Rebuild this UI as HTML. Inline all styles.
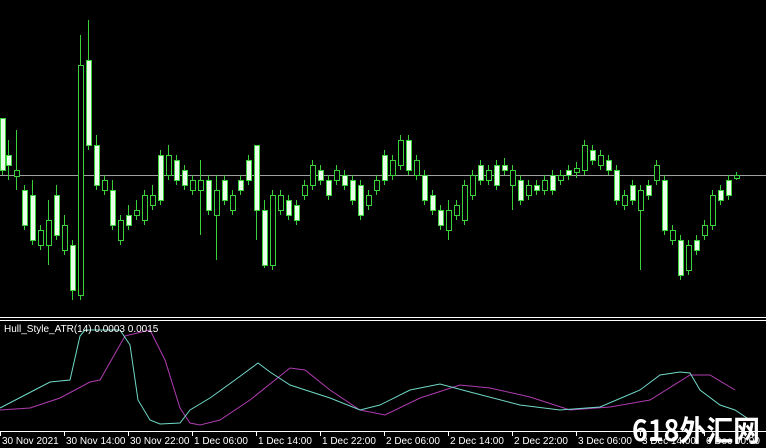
<!DOCTYPE html>
<html><head><meta charset="utf-8"><style>
html,body{margin:0;padding:0;background:#000;width:766px;height:448px;overflow:hidden}
svg{display:block}
.t{font-family:"Liberation Sans",sans-serif;font-size:10px;fill:#fff}
</style></head><body>
<svg id="s" width="766" height="448" xmlns="http://www.w3.org/2000/svg">
<rect width="766" height="448" fill="#000"/>
<line x1="0" y1="175.5" x2="766" y2="175.5" stroke="#a0a0a0" stroke-width="1"/>
<g id="c"></g>
<line x1="0" y1="317.5" x2="766" y2="317.5" stroke="#fff"/>
<line x1="0" y1="320.5" x2="766" y2="320.5" stroke="#fff"/>
<polyline fill="none" stroke="#b03cb0" stroke-width="1" points="0,410 30,408 60,398 90,382 100,380 125,336 150,330 165,360 180,408 190,423 200,425 220,420 250,400 290,368 305,370 330,390 360,410 385,415 420,398 460,385 490,388 530,397 570,410 610,407 650,400 690,375 710,375 735,390"/>
<polyline fill="none" stroke="#70d8c8" stroke-width="1" points="0,408 25,395 50,382 70,380 80,336 85,330 120,330 130,345 138,400 150,420 160,424 180,423 190,410 210,398 235,380 258,363 270,372 290,385 330,398 360,410 380,405 410,390 440,384 470,392 520,405 560,410 600,407 640,390 660,375 680,372 690,373 700,390 720,405 735,410 750,420"/>
<text class="t" x="4" y="332">Hull_Style_ATR(14) 0.0003 0.0015</text>
<line x1="0" y1="431.5" x2="766" y2="431.5" stroke="#fff"/>
<g id="ax"></g>
<text x="632" y="441" font-family="'Noto Sans CJK SC',sans-serif" font-size="29" font-weight="bold" fill="#fff" textLength="128" lengthAdjust="spacingAndGlyphs">618外汇网</text>
</svg>
<script>
var d=[[2,118,175,118,170,1],[8,140,180,155,165,1],[16,130,190,170,176,0],[24,185,230,190,225,1],[32,180,245,195,240,1],[40,225,250,230,245,0],[48,200,265,220,245,0],[56,185,240,195,235,1],[64,215,255,225,250,0],[72,240,300,245,290,1],[80,35,300,65,295,0],[88,20,150,60,145,1],[96,135,190,145,185,1],[104,175,195,180,190,0],[112,180,230,190,225,1],[120,215,245,220,240,0],[128,205,230,215,225,1],[136,200,220,210,215,0],[144,190,225,195,220,0],[152,185,210,195,205,0],[160,150,205,155,200,1],[168,145,180,155,175,0],[176,155,185,160,180,1],[184,165,190,170,185,1],[192,175,195,180,190,0],[200,160,235,180,190,0],[208,175,215,180,210,1],[216,175,260,190,215,0],[224,175,205,180,200,1],[232,190,215,195,210,0],[240,175,195,180,190,1],[248,155,185,160,180,1],[256,145,240,145,210,1],[264,200,268,210,265,1],[272,190,270,195,265,0],[280,190,215,195,210,0],[288,195,220,200,215,1],[296,200,225,205,220,1],[304,180,200,185,195,0],[312,160,190,165,185,0],[320,165,185,170,180,1],[328,175,200,180,195,1],[336,165,185,170,180,0],[344,170,190,175,185,1],[352,175,205,180,200,1],[360,180,220,185,215,1],[368,190,210,195,205,0],[376,175,195,180,190,0],[384,150,185,155,180,1],[392,155,180,160,175,0],[400,135,170,140,165,0],[408,135,175,140,170,1],[416,155,180,160,175,0],[424,170,205,175,200,1],[432,190,215,195,210,1],[440,205,230,210,225,1],[448,200,240,210,230,0],[456,200,220,205,215,0],[464,180,225,185,220,0],[472,170,200,175,195,0],[480,160,185,165,180,1],[488,165,185,170,180,0],[496,160,190,165,185,1],[504,158,175,165,170,1],[512,165,210,170,185,0],[520,175,205,180,200,1],[528,180,200,185,195,0],[536,180,195,185,190,1],[544,175,195,180,190,0],[552,170,195,175,190,1],[560,170,185,175,180,0],[568,165,180,170,175,1],[576,162,178,168,172,0],[584,140,175,145,170,0],[592,145,165,150,160,1],[600,150,170,155,165,0],[608,155,175,160,170,1],[616,165,205,170,200,1],[624,190,210,195,205,0],[632,180,205,185,200,1],[640,185,270,190,210,0],[648,180,200,185,195,1],[656,160,185,165,180,0],[664,175,235,180,230,1],[672,225,245,230,240,0],[680,235,280,240,275,1],[688,240,275,245,270,0],[696,235,255,240,250,1],[704,220,240,225,235,0],[712,190,230,195,225,0],[720,185,205,190,200,1],[728,175,200,180,195,1],[736,172,180,175,178,0]];
var h='';d.forEach(function(c){var x=c[0],t=Math.min(c[3],c[4]),b=Math.max(c[3],c[4]);
h+='<line x1="'+(x+.5)+'" y1="'+c[1]+'" x2="'+(x+.5)+'" y2="'+c[2]+'" stroke="#3ad03a"/>';
h+='<rect x="'+(x-2)+'.5" y="'+t+'.5" width="5" height="'+Math.max(1,b-t)+'" fill="'+(c[5]?'#eaffea':'#000')+'" stroke="#3ad03a"/>';});
document.getElementById('c').innerHTML=h;
var L=[[0,"30 Nov 2021"],[64,"30 Nov 14:00"],[128,"30 Nov 22:00"],[192,"1 Dec 06:00"],[256,"1 Dec 14:00"],[320,"1 Dec 22:00"],[384,"2 Dec 06:00"],[448,"2 Dec 14:00"],[512,"2 Dec 22:00"],[576,"3 Dec 06:00"],[640,"3 Dec 14:00"],[704,"6 Dec 00:00"]];
var a='';L.forEach(function(l){a+='<line x1="'+(l[0]+.5)+'" y1="432" x2="'+(l[0]+.5)+'" y2="436" stroke="#fff"/><text class="t" x="'+(l[0]+2)+'" y="444">'+l[1]+'</text>';});
document.getElementById('ax').innerHTML=a;
</script>
</body></html>
